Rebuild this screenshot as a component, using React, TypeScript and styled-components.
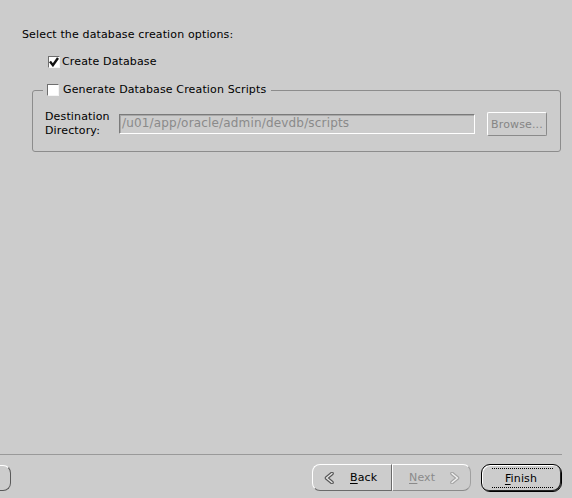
import React from "react";
import styled, { createGlobalStyle } from "styled-components";

const Global = createGlobalStyle`
  html, body { margin: 0; padding: 0; background: #cccccc; }
  body { font-family: "DejaVu Sans", Verdana, sans-serif; font-size: 11px; letter-spacing: 0.14px; color: #000; }
  #root { width: 572px; height: 498px; overflow: hidden; }
  * { box-sizing: border-box; }
`;

const Page = styled.div`
  width: 572px;
  height: 498px;
  display: flex;
  flex-direction: column;
  background: #cccccc;
  overflow: hidden;
`;

const Main = styled.div`
  flex: 1;
  padding: 28px 11px 0 22px;
  display: flex;
  flex-direction: column;
`;

const Title = styled.div`
  line-height: 14px;
  height: 14px;
  white-space: nowrap;
`;

const CheckRow = styled.label<{ $indent?: number }>`
  display: flex;
  align-items: center;
  gap: 2px;
  height: 14px;
  line-height: 14px;
  margin-top: 13px;
  margin-left: ${(p) => p.$indent ?? 0}px;
  white-space: nowrap;
`;

const Box = styled.span`
  width: 12px;
  height: 12px;
  flex: none;
  background: #ffffff;
  border: 1px solid;
  border-color: #6e6e6e #f4f4f4 #f4f4f4 #6e6e6e;
  display: flex;
  align-items: center;
  justify-content: center;
`;

const Group = styled.fieldset`
  margin: 14px 0 0 10px;
  padding: 13px 13px 13px 12px;
  border: 1px solid #8c8c8c;
  border-radius: 3px;
  min-width: 0;
`;

const Legend = styled.legend`
  margin-left: -2px;
  padding: 0 5px 0 4px;
  display: flex;
  align-items: center;
  gap: 4px;
  height: 14px;
  line-height: 14px;
  white-space: nowrap;
`;

const DirRow = styled.div`
  display: flex;
  align-items: center;
`;

const DirLabel = styled.div`
  line-height: 14px;
  width: 74px;
  flex: none;
  white-space: nowrap;
`;

const Field = styled.div`
  flex: 1;
  height: 20px;
  border: 1px solid;
  border-color: #7a7a7a #ffffff #ffffff #7a7a7a;
  box-shadow: inset 1px 1px 0 #a8a8a8;
  color: #8a8a8a;
  padding-left: 2px;
  font-size: 12px;
  letter-spacing: 0.17px;
  line-height: 17px;
  white-space: nowrap;
  overflow: hidden;
`;

const SmallButton = styled.div`
  width: 60px;
  height: 24px;
  margin-left: 12px;
  flex: none;
  border: 1px solid;
  border-color: #ffffff #8a8a8a #8a8a8a #ffffff;
  border-radius: 2px;
  color: #858585;
  display: flex;
  align-items: center;
  justify-content: center;
`;

const Footer = styled.div`
  flex: none;
  display: flex;
  flex-direction: column;
`;

const Separator = styled.div`
  height: 1px;
  background: #999999;
  margin-right: 10px;
`;

const ButtonBar = styled.div`
  display: flex;
  justify-content: space-between;
  align-items: flex-start;
  padding: 9px 10px 6px 0;
`;

const Right = styled.div`
  display: flex;
  align-items: flex-start;
`;

const NavButton = styled.div<{ $side: "left" | "right"; $disabled?: boolean; $width: number; $pad: number }>`
  width: ${(p) => p.$width}px;
  height: 27px;
  display: flex;
  align-items: center;
  gap: ${(p) => (p.$side === "left" ? 16 : 15)}px;
  padding-left: ${(p) => p.$pad}px;
  border: 1px solid;
  border-color: ${(p) =>
    p.$side === "left" ? "#ffffff #6a6a6a #6a6a6a #ffffff" : "#ffffff #a0a0a0 #8a8a8a #ffffff"};
  border-radius: ${(p) => (p.$side === "left" ? "8px 0 0 8px" : "0 8px 8px 0")};
  color: ${(p) => (p.$disabled ? "#8a8a8a" : "#000")};
  white-space: nowrap;
`;

const CutButton = styled.div`
  width: 70px;
  height: 26px;
  margin-left: -59px;
  margin-top: 1px;
  border: 1px solid;
  border-color: #ffffff #5a5a5a #5a5a5a #ffffff;
  border-radius: 0 8px 8px 0;
`;

const DefaultButton = styled.div`
  width: 81px;
  height: 28px;
  margin-left: 10px;
  border: 1px solid #000;
  border-radius: 9px;
  box-shadow: inset 1px 1px 0 #ffffff, inset -1px -1px 0 #222;
  display: flex;
  align-items: center;
  justify-content: center;
  padding: 3px 8px 3px 10px;
`;

const FocusRing = styled.div`
  flex: 1;
  height: 100%;
  border-top: 1px dotted #000;
  border-bottom: 1px dotted #000;
  display: flex;
  align-items: center;
  justify-content: center;
  padding-right: 3px;
`;

const Mn = styled.span`
  text-decoration: underline;
  text-underline-offset: 2px;
`;

const Check = () => (
  <svg width="10" height="10" viewBox="0 0 10 10">
    <path d="M1 4.6 L3.9 8.2 L9 1" fill="none" stroke="#111" strokeWidth="2.4" />
  </svg>
);

const Chevron = ({ dir, dim }: { dir: "left" | "right"; dim?: boolean }) => {
  const pts = dir === "left" ? "8,1.5 2.5,6 8,10.5" : "2,1.5 7.5,6 2,10.5";
  return (
    <svg width="10" height="12" viewBox="0 0 10 12">
      <polyline points={pts} fill="none" stroke={dim ? "#a4a4a4" : "#555"} strokeWidth="3.6" strokeLinejoin="round" strokeLinecap="round" />
      <polyline points={pts} fill="none" stroke={dim ? "#f2f2f2" : "#e8e8e8"} strokeWidth="1.4" strokeLinejoin="round" strokeLinecap="round" />
    </svg>
  );
};

export default function App() {
  return (
    <>
      <Global />
      <Page>
        <Main>
          <Title>Select the database creation options:</Title>
          <CheckRow $indent={26}>
            <Box>
              <Check />
            </Box>
            Create Database
          </CheckRow>
          <Group>
            <Legend>
              <Box />
              Generate Database Creation Scripts
            </Legend>
            <DirRow>
              <DirLabel>
                Destination
                <br />
                Directory:
              </DirLabel>
              <Field>/u01/app/oracle/admin/devdb/scripts</Field>
              <SmallButton>Browse...</SmallButton>
            </DirRow>
          </Group>
        </Main>
        <Footer>
          <Separator />
          <ButtonBar>
            <CutButton />
            <Right>
              <NavButton $side="left" $width={80} $pad={11}>
                <Chevron dir="left" />
                <span>
                  <Mn>B</Mn>ack
                </span>
              </NavButton>
              <NavButton $side="right" $disabled $width={79} $pad={16}>
                <span>
                  <Mn>N</Mn>ext
                </span>
                <Chevron dir="right" dim />
              </NavButton>
              <DefaultButton>
                <FocusRing>
                  <span>
                    <Mn>F</Mn>inish
                  </span>
                </FocusRing>
              </DefaultButton>
            </Right>
          </ButtonBar>
        </Footer>
      </Page>
    </>
  );
}
